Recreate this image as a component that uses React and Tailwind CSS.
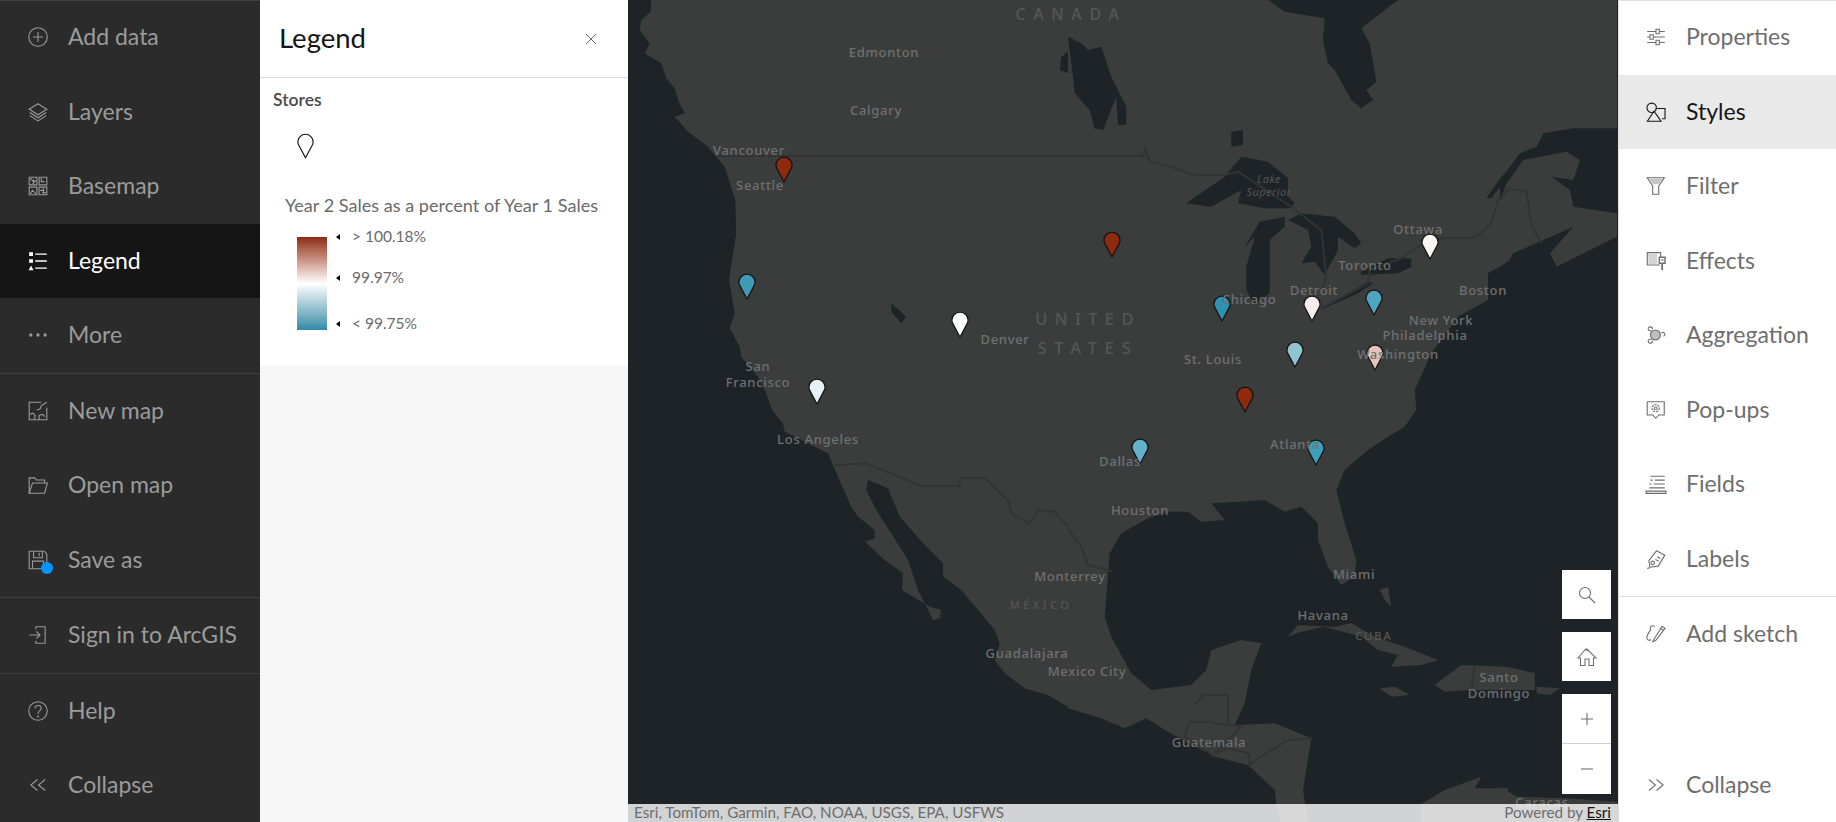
import React from 'react';

const z = (ox, oy, a) => {
  const out = [];
  for (let i = 0; i < a.length; i += 2) out.push(`${(ox + a[i] / 3).toFixed(1)},${(oy + a[i + 1] / 3).toFixed(1)}`);
  return out;
};
const Z5 = [628, 0], Z6 = [1068, 0], Z7 = [628, 410], Z8 = [1068, 410], Z3 = [1500, 0], Z4 = [1500, 410];
const poly = (...parts) => parts.flat().join(' ');

const land = poly(
  z(...Z5, [70,0, 68,35, 40,60, 35,90, 65,130, 50,160, 100,190, 115,235, 140,265, 150,300, 170,340, 140,350, 180,395, 240,440, 290,500, 322,600, 325,700, 303,840, 320,940, 305,985, 335,1040, 340,1070, 390,1130, 415,1180, 432,1230]),
  z(...Z7, [465,40, 470,65, 560,110, 600,130, 630,200, 670,290, 690,320, 740,360, 740,385, 710,395, 770,450, 825,490, 822,540, 905,590, 940,600, 935,625, 915,630, 870,540, 840,450, 790,370, 750,310, 715,240, 720,210, 780,235, 815,320, 885,400, 945,460, 945,500, 1000,540, 1100,660, 1115,700, 1100,750, 1130,790, 1190,835, 1260,855, 1320,890]),
  z(...Z8, [0,895, 100,925, 170,955, 235,925, 300,965, 440,1040, 540,1065, 620,1140, 625,1182, 640,1236, 720,1236, 705,1140, 730,985, 620,940, 500,945, 530,880, 550,780, 580,700, 520,690, 430,720, 415,780, 370,825, 250,840, 190,790, 130,680, 110,620, 125,430, 160,370, 240,325, 300,305, 360,305, 400,335, 470,330, 430,280, 520,275, 590,270, 650,305, 700,290, 750,340, 750,390, 780,470, 820,525, 860,500, 865,450, 830,340, 805,240, 830,180, 900,120, 960,80, 1010,50, 1045,0]),
  z(...Z6, [1040,1170, 1090,1060, 1170,950, 1260,900, 1260,820, 1320,785]),
  z(...Z3, [40,760, 130,720, 220,680, 150,760, 170,800, 351,710, 351,0]),
);

const water = [
  poly(z(...Z6, [600,0, 650,35, 770,55, 765,120, 780,190, 800,210, 850,300, 880,325, 915,300, 895,270, 925,245, 905,130, 880,85, 990,0])),
  poly(z(...Z6, [60,150, 100,140, 130,230, 175,320, 175,375, 150,375, 145,290, 105,390, 80,385, 65,330, 20,280, 15,230, 0,110, 40,130])),
  poly(z(...Z5, [1300,170, 1320,155, 1320,220, 1295,210])),
  poly(z(...Z5, [790,910, 835,950, 820,970, 790,935])),
  poly(z(...Z6, [490,395, 525,390, 525,435, 490,440])),
  poly(z(...Z6, [355,610, 470,530, 520,470, 600,485, 660,535, 660,590, 680,610, 665,625, 590,625, 510,610, 520,570, 430,620])),
  poly(z(...Z6, [530,740, 575,665, 650,650, 650,680, 605,720, 605,880, 560,915, 535,870, 535,800, 560,710])),
  poly(z(...Z6, [660,660, 700,640, 800,650, 860,700, 880,730, 860,745, 810,710, 810,750, 770,825, 740,785, 700,790, 730,740, 720,690])),
  poly(z(...Z6, [760,925, 900,845, 915,850, 870,880, 770,925])),
  poly(z(...Z6, [878,815, 960,775, 1030,775, 1030,800, 990,820, 880,825])),
  poly(z(...Z3, [351,385, 220,385, 130,400, 110,440, 60,460, 0,540, 0,600, 20,550, 70,480, 200,455, 240,480, 220,540, 155,530, 210,570, 220,620, 351,640, 351,680, 351,460])),
  poly(z(...Z6, [1255,595, 1300,530, 1320,510, 1320,530, 1270,595])),
];

const islands = [
  poly(z(...Z8, [660,680, 690,645, 800,650, 850,640, 920,680, 1010,710, 1110,750, 1060,765, 970,770, 990,735, 930,720, 880,680, 770,650, 700,665])),
  poly(z(...Z8, [935,835, 980,830, 1025,855, 970,860])),
  poly(z(...Z8, [1100,825, 1180,765, 1320,770, 1320,840, 1210,840, 1130,845])),
  poly(z(...Z8, [1320,770, 1400,790, 1400,840, 1320,840])),
  poly(z(...Z4, [110,830, 180,835, 150,855, 110,850])),
  poly(z(...Z8, [935,540, 960,530, 970,590, 950,570])),
  poly(z(...Z8, [1060,1182, 1130,1140, 1240,1100, 1220,1135, 1320,1135, 1320,1240, 1060,1240])),
  poly(z(...Z4, [0,1130, 50,1160, 200,1165, 351,1175, 351,1240, 0,1240])),
];

const borders = [
  poly(z(...Z5, [270,467, 1320,467])),
  poly(z(...Z6, [0,467, 225,467, 230,445, 245,485, 290,495, 380,525, 470,525, 510,515, 670,620, 760,690, 775,830, 760,870])),
  poly(z(...Z6, [760,925, 900,850, 905,810, 1000,775, 1060,735, 1120,715, 1220,715, 1270,670, 1290,600, 1320,570])),
  poly(z(...Z3, [0,600, 25,565, 80,575, 95,680, 125,730])),
  poly(z(...Z7, [620,165, 715,160, 880,228, 995,228, 995,205, 1070,205, 1140,270, 1150,310, 1205,340, 1230,300, 1280,305, 1320,350])),
  poly(z(...Z8, [0,355, 40,410, 60,465, 135,485])),
  poly(z(...Z8, [380,885, 405,855, 480,855, 480,945, 420,935, 365,935, 350,980, 440,1040])),
  poly(z(...Z8, [440,1030, 480,1015, 540,1030, 545,1065, 570,1045, 660,990, 735,985])),
  poly(z(...Z8, [480,945, 520,950, 440,1030])),
  poly(z(...Z8, [1220,770, 1210,840])),
];

const labels = [
  ['Edmonton', 884, 52], ['Calgary', 876, 110], ['Vancouver', 749, 150], ['Seattle', 760, 185],
  ['Denver', 1005, 339], ['San', 758, 366], ['Francisco', 758, 382], ['Ottawa', 1418, 229], ['Toronto', 1365, 265],
  ['Boston', 1483, 290], ['Chicago', 1249, 299], ['Detroit', 1314, 290], ['New York', 1441, 320],
  ['Philadelphia', 1425, 335], ['Washington', 1398, 354], ['St. Louis', 1213, 359], ['Los Angeles', 818, 439],
  ['Monterrey', 1070, 576], ['Guadalajara', 1027, 653], ['Mexico City', 1087, 671], ['Dallas', 1120, 461],
  ['Atlanta', 1295, 444], ['Houston', 1140, 510], ['Miami', 1354, 574], ['Havana', 1323, 615],
  ['Guatemala', 1209, 742], ['Santo', 1499, 677], ['Domingo', 1499, 693], ['Caracas', 1542, 802],
];
const spaced = [
  ['CANADA', 1071, 14, 'text-[16px] tracking-[7.6px] text-[#555757]'],
  ['UNITED', 1088, 319, 'text-[16.5px] tracking-[7.4px] text-[#555757]'],
  ['STATES', 1088, 348, 'text-[16.5px] tracking-[7.8px] text-[#555757]'],
  ['MÉXICO', 1041, 604, 'text-[11px] tracking-[3.4px] text-[#555757]'],
  ['CUBA', 1374, 635, 'text-[11px] tracking-[2px] text-[#555757]'],
];

const pins = [
  ['#8e2a0e', 784, 182], ['#3f9bb5', 747, 299], ['#ffffff', 960, 337], ['#e6f0f5', 817, 404],
  ['#8e2a0e', 1112, 257], ['#2f93b0', 1222, 321], ['#f5ecea', 1312, 321], ['#4fa5bf', 1374, 315],
  ['#faf6f5', 1430, 259], ['#8fc5d3', 1295, 367], ['#e5c3ba', 1375, 370], ['#8e2a0e', 1245, 412],
  ['#63b2c9', 1140, 464], ['#3d9fbb', 1316, 465],
];

const Pin = ({ fill, className }) => (
  <svg viewBox="0 0 18 27" className={className}>
    <path d="M9 26 L2.3 13.4 C1.4 11.8 .9 10.6 .9 9.2 A8.1 8.1 0 0 1 17.1 9.2 C17.1 10.6 16.6 11.8 15.7 13.4 Z" fill={fill} stroke="#111" strokeWidth="1.2" strokeLinejoin="round" />
  </svg>
);

const I = ({ children }) => (
  <svg viewBox="0 0 20 20" className="h-[22px] w-[22px]" fill="none" stroke="currentColor" strokeWidth="1">{children}</svg>
);

const icons = {
  add: <I><circle cx="10" cy="10" r="8.4" /><path d="M10 5.5v9M5.5 10h9" /></I>,
  layers: <I><path d="M10 2.500 18 7.500 10 12.500 2 7.500Z" /><path d="M2.500 10.500 10 15.300l7.500-4.800M2.500 13.300 10 18.100l7.500-4.800" /></I>,
  basemap: <I><path d="M2 2h7v7H2zM11 2h7v7h-7zM2 11h7v7H2zM11 11h7v7h-7z" /><path d="M3 3l3 3v-2M5 8l3-3M13 3v3h3M12 14h3M15 12v5M3 17l2-3 3 3M14 16h3" /></I>,
  legend: <I><path d="M2.500 2.500h2.400v2.400H2.500zM2.500 8.800h2.400v2.400H2.500z" fill="currentColor" /><path d="M3.700 15.200l1.400 2.600H2.300z" fill="currentColor" /><path d="M7.500 3.700H18M7.500 10H18M7.500 16.500H18" strokeWidth="1.200" /></I>,
  more: <I><circle cx="3.500" cy="10" r="1.500" fill="currentColor" stroke="none" /><circle cx="10" cy="10" r="1.500" fill="currentColor" stroke="none" /><circle cx="16.500" cy="10" r="1.500" fill="currentColor" stroke="none" /></I>,
  newmap: <I><path d="M18 7v11H2V2h11" /><path d="M2.500 13l3-1 2 2.500-1 3M11 18v-4l3-1 2 2M9 9l3-1 1-3 5-3" /></I>,
  open: <I><path d="M2 17.500V3.500h5l1.500 2H16v2.500" /><path d="M2 17.500 5 8.200h13.500l-2.500 9.300Z" /></I>,
  save: <I><path d="M2 2h13.500L18 4.500V18H2Z" /><path d="M6 2v6h8V2M11 3.500V6.500M5 18v-7h10v7" /></I>,
  signin: <I><path d="M8 2.500h8.500v15H8v-2.200M8 2.500v2.200" /><path d="M2 10h9.500M8.500 6.800 11.800 10 8.500 13.200" /></I>,
  help: <I><circle cx="10" cy="10" r="8.400" /><path d="M7.300 7.800C7.300 6 8.600 5 10.100 5c1.600 0 2.800 1 2.800 2.600 0 2.300-2.800 2.200-2.800 4.600v.6" /><circle cx="10" cy="15" r=".9" fill="currentColor" stroke="none" /></I>,
  collapseL: <I><path d="M9.500 5 3.500 10l6 5M16.500 5l-6 5 6 5" /></I>,
  collapseR: <I><path d="M3.500 5l6 5-6 5M10.500 5l6 5-6 5" /></I>,
  props: <I><path d="M2 5h8M13 5h5M2 10h2.500M7.500 10H18M2 15h8M13 15h5" /><path d="M10 3h3v4h-3zM4.500 8h3v4h-3zM10 13h3v4h-3z" /></I>,
  styles: <I><circle cx="6.100" cy="6.200" r="4.300" /><path d="M9.500 6.800h8.700v9.400h-2.700" /><path d="M2.100 18.400 8.200 9.300 14.600 18.400Z" /></I>,
  filter: <I><path d="M2 2.500h15.600L12.500 10v7.500H7V10Z" /><path d="M3.500 3.500h12.600l-4 5H7.500Z" fill="currentColor" fillOpacity=".4" stroke="none" /></I>,
  effects: <I><path d="M14.200 6.500V2.400H2.100v11.200h11.400" /><path d="M3 3.400h8v9.300H3z" fill="currentColor" fillOpacity=".3" stroke="none" /><path d="M13 6.600h5.200V12H13z" strokeWidth="1.300" /><path d="M15.600 12v6.300" strokeWidth="1.600" /><path d="M14.500 9h2.500" /></I>,
  agg: <I><circle cx="9.500" cy="10" r="4.500" fill="currentColor" fillOpacity=".45" /><path d="M6 5.900C5 6.400 3.400 6.300 3 5 2.600 3.500 3.800 2.400 5 2.600c1.200.2 1.900 1.200 1.800 2.200M6 14.100c-1 -.5-2.600-.4-3 .9-.4 1.500.8 2.600 2 2.400 1.200-.2 1.900-1.200 1.800-2.200M15 8.200c.9-.9 2.600-.7 3 .6.300 1-.2 2-1.200 2.200" /></I>,
  popup: <I><path d="M2 2.500h15.500v12h-5L9.800 17.500 7.100 14.500H2Z" /><circle cx="9.700" cy="8.300" r="1.300" /><circle cx="9.700" cy="8.300" r="3.300" strokeDasharray="2 .8" /></I>,
  fields: <I><path d="M5 3h13M5 6.500h2M9 6.500h9M4 10h2M8 10h10M4 13.500h14" /><path d="M1 16.500h18v2H1z" /></I>,
  labels: <I><path d="M10.500 2.500 18 6.500l-6 10-7.500 1-1-6Z" /><circle cx="7" cy="13.500" r="1.600" /><path d="M11 8l3 1.500M9.500 10.500l3 1.500M2 18.500l2.500-.5" /></I>,
  sketch: <I><path d="M7 16.800 15.500 3l2.700 1.800-8.500 11.200Z" /><path d="M14.300 5l2.700 1.800" /><path d="M9 3.300C6 1.500 4 3.500 5 5.300 6 7.300 2 9 1.700 13 1.500 15.500 3.500 16.500 5.500 15" /></I>,
};

const Row = ({ icon, label, active, dark, children }) => (
  <div className={`flex h-[74.5px] items-center ${dark ? 'pl-[27px]' : 'pl-[26px]'} ${active ? (dark ? 'bg-[#151515] text-white' : 'bg-[#e9e9e9] text-[#151515]') : dark ? 'text-[#9b9b9b]' : 'text-[#6e6e6e]'}`}>
    <span className="relative mr-[19px] flex w-[22px] justify-center">
      {icons[icon]}
      {children}
    </span>
    <span className="pb-px text-[23px] leading-none">{label}</span>
  </div>
);

const Group = ({ children, dark, last }) => (
  <div className={last ? '' : dark ? 'border-b border-[#404040]' : 'border-b border-[#dcdcdc]'}>{children}</div>
);

const Tick = ({ className, label }) => (
  <div className={`absolute left-[9px] flex items-center ${className}`}>
    <span className="mr-[12px] h-0 w-0 border-y-[3.5px] border-r-[4px] border-y-transparent border-r-black" />
    <span>{label}</span>
  </div>
);

const Legend = () => (
  <aside className="flex w-[368px] shrink-0 flex-col bg-[#f7f7f7]">
    <div className="h-[366px] bg-white">
      <div className="flex h-[78px] items-center justify-between border-b border-[#dcdcdc] pl-[19px] pr-[31px]">
        <h2 className="pb-[2px] text-[27.5px] font-normal text-[#151515]">Legend</h2>
        <svg viewBox="0 0 12 12" className="h-[12px] w-[12px]" stroke="#6a6a6a" strokeWidth="1"><path d="M1 1l10 10M11 1 1 11" /></svg>
      </div>
      <div className="pl-[13px]">
        <p className="mt-[11px] text-[17.5px] font-semibold leading-[22px] text-[#4a4a4a]">Stores</p>
        <Pin fill="#ffffff" className="ml-[24px] mt-[22px] h-[26px] w-[17px]" />
        <p className="ml-[12px] mt-[35px] text-[18.1px] leading-[22px] text-[#6a6a6a]">Year 2 Sales as a percent of Year 1 Sales</p>
        <div className="ml-[24px] mt-[21px] flex h-[93px]">
          <div className="h-[93px] w-[30px] bg-linear-to-b from-[#8c2a12] via-white to-[#2f8ba6]" />
          <div className="relative flex-1 text-[15.5px] leading-none text-[#6a6a6a]">
            <Tick className="top-[-8px]" label="> 100.18%" />
            <Tick className="top-[33px]" label="99.97%" />
            <Tick className="top-[79px]" label="< 99.75%" />
          </div>
        </div>
      </div>
    </div>
  </aside>
);

const MapBtn = ({ children, className = 'h-[49px]' }) => (
  <div className={`flex w-[49px] items-center justify-center bg-white text-[#6e6e6e] ${className}`}>{children}</div>
);

const MapArea = () => (
  <main className="relative w-[990px] shrink-0 overflow-hidden bg-[#1e2327] font-['Noto_Sans',sans-serif]">
    <svg viewBox="628 0 990 822" className="absolute inset-0 h-[822px] w-[990px]">
      <polygon points={land} fill="#3b3d3d" />
      {islands.map((p, i) => <polygon key={i} points={p} fill="#3b3d3d" />)}
      {water.map((p, i) => <polygon key={i} points={p} fill="#1e2327" />)}
      {borders.map((p, i) => <polyline key={i} points={p} fill="none" stroke="#323434" strokeWidth="2" />)}
    </svg>
    {pins.map(([c, x, y], i) => (
      <div key={i} className="absolute" style={{ left: x - 628 - 9, top: y - 26 }}>
        <Pin fill={c} className="block h-[27px] w-[18px]" />
      </div>
    ))}
    {labels.map(([t, x, y]) => (
      <span key={t + y} className="absolute -translate-x-1/2 -translate-y-1/2 whitespace-nowrap text-[13px] font-medium leading-none tracking-[0.7px] text-[#6f7171]" style={{ left: x - 628, top: y }}>{t}</span>
    ))}
    {spaced.map(([t, x, y, c]) => (
      <span key={t} className={`absolute -translate-x-1/2 -translate-y-1/2 whitespace-nowrap font-medium leading-none ${c}`} style={{ left: x - 628, top: y }}>{t}</span>
    ))}
    <span className="absolute left-[641px] top-[185px] -translate-x-1/2 -translate-y-1/2 text-center text-[11px] italic leading-[13px] tracking-[0.4px] text-[#555757]">Lake<br />Superior</span>
    <div className="absolute bottom-[28px] right-[7px] flex flex-col gap-[13px] font-['Lato',sans-serif]">
      <MapBtn>
        <svg viewBox="0 0 18 18" className="h-[18px] w-[18px]" fill="none" stroke="currentColor" strokeWidth="1.1"><circle cx="7" cy="7" r="5.500" /><path d="M11 11l6 6" /></svg>
      </MapBtn>
      <MapBtn>
        <svg viewBox="0 0 20 20" className="h-[20px] w-[20px]" fill="none" stroke="currentColor" strokeWidth="1.1"><path d="M1 11 8.500 2.200 10 3.500V2l9 9h-2.500v7.500h-4.500V12H8v6.500H3.500V11Z" /></svg>
      </MapBtn>
      <div className="flex flex-col">
        <MapBtn className="h-[50px] border-b border-[#cfcfcf]">
          <svg viewBox="0 0 14 14" className="h-[14px] w-[14px]" stroke="currentColor" strokeWidth="1.1"><path d="M7 1v12M1 7h12" /></svg>
        </MapBtn>
        <MapBtn className="h-[50px]">
          <svg viewBox="0 0 14 14" className="h-[14px] w-[14px]" stroke="currentColor" strokeWidth="1.1"><path d="M1 7h12" /></svg>
        </MapBtn>
      </div>
    </div>
    <div className="absolute inset-x-0 bottom-0 flex h-[18px] items-center justify-between bg-white/80 pl-[6px] pr-[7px] font-['Lato',sans-serif] text-[15.2px] leading-none text-[#6e6e6e]">
      <span>Esri, TomTom, Garmin, FAO, NOAA, USGS, EPA, USFWS</span>
      <span>Powered by <span className="text-[#151515] underline">Esri</span></span>
    </div>
  </main>
);

export default function App() {
  return (
    <div className="flex h-[822px] w-[1836px] overflow-hidden font-['Lato',sans-serif]">
      <nav className="flex w-[260px] shrink-0 flex-col bg-[#2b2b2b] shadow-[inset_0_1px_0_#404040]">
        <Group dark>
          <Row dark icon="add" label="Add data" />
          <Row dark icon="layers" label="Layers" />
          <Row dark icon="basemap" label="Basemap" />
          <Row dark active icon="legend" label="Legend" />
          <Row dark icon="more" label="More" />
        </Group>
        <Group dark>
          <Row dark icon="newmap" label="New map" />
          <Row dark icon="open" label="Open map" />
          <Row dark icon="save" label="Save as">
            <span className="absolute left-[14px] top-[13px] h-[12px] w-[12px] rounded-full bg-[#0095ff]" />
          </Row>
        </Group>
        <Group dark>
          <Row dark icon="signin" label="Sign in to ArcGIS" />
        </Group>
        <Group dark last>
          <Row dark icon="help" label="Help" />
          <Row dark icon="collapseL" label="Collapse" />
        </Group>
      </nav>
      <Legend />
      <MapArea />
      <nav className="flex flex-1 flex-col border-l border-[#e0e0e0] bg-white shadow-[inset_0_1px_0_#e0e0e0]">
        <Group>
          <Row icon="props" label="Properties" />
          <Row active icon="styles" label="Styles" />
          <Row icon="filter" label="Filter" />
          <Row icon="effects" label="Effects" />
          <Row icon="agg" label="Aggregation" />
          <Row icon="popup" label="Pop-ups" />
          <Row icon="fields" label="Fields" />
          <Row icon="labels" label="Labels" />
        </Group>
        <Row icon="sketch" label="Add sketch" />
        <div className="flex-1" />
        <Row icon="collapseR" label="Collapse" />
      </nav>
    </div>
  );
}
